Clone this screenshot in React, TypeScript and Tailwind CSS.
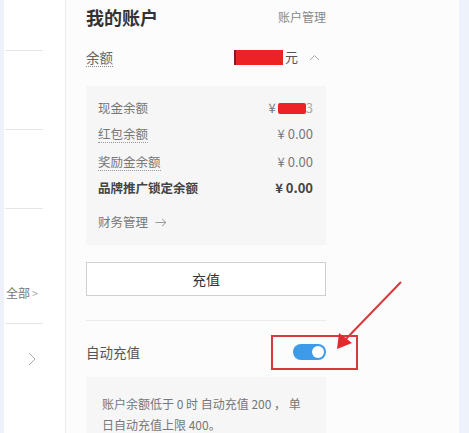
import React from "react";

const font = { fontFamily: '"Noto Sans CJK SC", "Noto Sans", sans-serif' };

function ChevronUp() {
  return (
    <svg width="11" height="7" viewBox="0 0 11 7" className="ml-[11px]">
      <polyline points="1,6 5.5,1.5 10,6" fill="none" stroke="#aaa" strokeWidth="1" />
    </svg>
  );
}

function ArrowRight() {
  return (
    <svg width="12" height="9" viewBox="0 0 12 9" className="ml-[7px]">
      <line x1="0.5" y1="4.5" x2="11" y2="4.5" stroke="#999" strokeWidth="1" />
      <polyline points="7,0.8 11,4.5 7,8.2" fill="none" stroke="#999" strokeWidth="1" />
    </svg>
  );
}

function BalanceRow({
  label,
  value,
  dotted,
  bold,
}: {
  label: string;
  value: React.ReactNode;
  dotted?: boolean;
  bold?: boolean;
}) {
  return (
    <div className="flex h-[20px] items-center justify-between">
      <span
        className={
          bold
            ? "text-[12.5px] font-bold text-[#444]"
            : dotted
              ? "border-b border-dotted border-[#999] text-[12.5px] leading-[17px] text-[#777]"
              : "text-[12.5px] text-[#777]"
        }
      >
        {label}
      </span>
      <span className={bold ? "text-[13px] font-bold text-[#444]" : "text-[13px] text-[#777]"}>{value}</span>
    </div>
  );
}

export default function App() {
  return (
    <div className="relative flex h-[433px] w-[469px] overflow-hidden bg-white" style={font}>
      {/* left edge strip */}
      <div className="w-[4px] shrink-0 bg-[#eef1f9]" />

      {/* sidebar remnant */}
      <div className="flex w-[62px] shrink-0 flex-col border-r border-[#ececec] bg-white">
        <div className="ml-[1px] mt-[50px] h-px w-[38px] bg-[#e6e6e6]" />
        <div className="ml-[1px] mt-[78px] h-px w-[38px] bg-[#e6e6e6]" />
        <div className="ml-[1px] mt-[78px] h-px w-[38px] bg-[#e6e6e6]" />
        <div className="ml-[2px] mt-[74px] flex h-[20px] items-center text-[12px] text-[#777]">
          全部<span className="ml-[2px] text-[11px] text-[#aaa]">&gt;</span>
        </div>
        <div className="ml-[1px] mt-[20px] h-px w-[38px] bg-[#e6e6e6]" />
        <div className="ml-[24px] mt-[28px]">
          <svg width="8" height="14" viewBox="0 0 8 14">
            <polyline points="1,1 7,7 1,13" fill="none" stroke="#aaa" strokeWidth="1" />
          </svg>
        </div>
      </div>

      {/* main panel */}
      <div className="w-[393px] shrink-0 bg-[#fcfcfd] pl-[20px]">
        <div className="w-[240px]">
          <div className="mt-[5px] flex h-[24px] items-center justify-between">
            <span className="text-[18px] font-semibold text-[#333]">我的账户</span>
            <span className="text-[12px] text-[#888]">账户管理</span>
          </div>

          <div className="mt-[18px] flex h-[20px] items-center justify-between">
            <span className="border-b border-dotted border-[#888] text-[13.5px] leading-[18px] text-[#666]">余额</span>
            <span className="flex items-center">
              <span className="flex h-[15px] w-[49px]">
                <span className="w-[2px] bg-[#7a2020]" />
                <span className="flex-1 bg-[#ec2224]" />
              </span>
              <span className="ml-[2px] text-[13px] text-[#555]">元</span>
              <ChevronUp />
              <span className="w-[6px]" />
            </span>
          </div>

          <div className="mt-[19px] bg-[#f6f6f7] pb-[13px] pl-[12px] pr-[13px] pt-[12px]">
            <BalanceRow
              label="现金余额"
              value={
                <span className="flex items-center">
                  ¥<span className="ml-[2px] h-[11px] w-[28px] rounded-[2px] bg-[#ec2224]" />
                  <span className="text-[#aaa]">3</span>
                </span>
              }
            />
            <div className="mt-[6px]">
              <BalanceRow label="红包余额" value="¥ 0.00" dotted />
            </div>
            <div className="mt-[8px]">
              <BalanceRow label="奖励金余额" value="¥ 0.00" dotted />
            </div>
            <div className="mt-[6px]">
              <BalanceRow label="品牌推广锁定余额" value="¥ 0.00" bold />
            </div>
            <div className="mt-[14px] flex h-[20px] items-center text-[12.5px] text-[#777]">
              财务管理
              <ArrowRight />
            </div>
          </div>

          <button className="mt-[17px] flex h-[34px] w-full items-center justify-center border border-[#cfcfcf] bg-white text-[14px] text-[#333]">
            充值
          </button>

          <div className="mt-[24px] h-px bg-[#ebebeb]" />

          <div className="mt-[21px] flex h-[20px] items-center justify-between">
            <span className="text-[13.5px] text-[#555]">自动充值</span>
            <span className="relative flex h-[16px] w-[33px] items-center justify-end rounded-full bg-[#3d9be9] pr-[2px]">
              <span className="h-[12px] w-[12px] rounded-full bg-white" />
            </span>
          </div>

          <div className="mt-[15px] h-[80px] bg-[#f6f6f7] pl-[16px] pt-[16px] text-[12px] leading-[21px] text-[#777]">
            <div className="whitespace-nowrap">账户余额低于 0 时 自动充值 200 ， 单</div>
            <div className="whitespace-nowrap">日自动充值上限 400。</div>
          </div>
        </div>
      </div>

      {/* right edge strip */}
      <div className="flex-1 bg-[#eef2fb]" />

      {/* red annotation overlay */}
      <div className="absolute left-[271px] top-[335px] h-[35px] w-[87px] border-2 border-[#d63a3c]" />
      <svg className="absolute left-0 top-0" width="469" height="433" viewBox="0 0 469 433">
        <line x1="401" y1="282" x2="344" y2="341" stroke="#d9393b" strokeWidth="2" />
        <polygon points="337,349 339,333 352,343" fill="#e02a2c" />
      </svg>
    </div>
  );
}
